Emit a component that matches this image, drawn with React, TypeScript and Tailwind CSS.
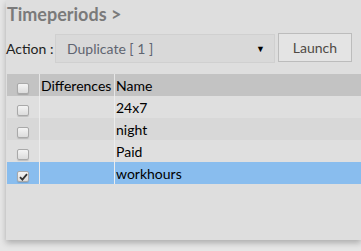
const rows = [
  { name: "24x7", bg: "bg-[#dfdfdf]", checked: false },
  { name: "night", bg: "bg-[#d8d8d8]", checked: false },
  { name: "Paid", bg: "bg-[#dfdfdf]", checked: false },
  { name: "workhours", bg: "bg-[#89bdee]", checked: true },
];

function Box({ checked }: { checked?: boolean }) {
  return (
    <span className="flex h-[11px] w-[12px] items-center justify-center rounded-[2px] border border-[#a9a9a9] bg-gradient-to-b from-[#f4f4f4] to-[#dcdcdc] shadow-[0_1px_1px_rgba(0,0,0,0.15)]">
      {checked ? (
        <svg width="9" height="8" viewBox="0 0 9 8">
          <path d="M1 4.2 L3.4 6.6 L8 1.2" fill="none" stroke="#333" strokeWidth="1.8" />
        </svg>
      ) : null}
    </span>
  );
}

export default function App() {
  return (
    <div className="h-[251px] w-[361px] overflow-hidden bg-[#e6e6e6] pl-[6px] font-['Lato',sans-serif]">
      <div className="h-[240px] bg-[#dedede] shadow-[0_3px_6px_rgba(0,0,0,0.25)]">
        <h1 className="pl-[1px] pt-[3px] text-[18px] font-bold leading-[22px] text-[#7a7a7a]">Timeperiods &gt;</h1>

        <div className="mt-[9px] flex items-center">
          <span className="w-[49px] text-[14px] text-[#222]">Action :</span>
          <div className="flex h-[29px] w-[220px] items-center justify-between border border-[#d0d0d0] bg-[#d9d9d9] pl-[11px] pr-[9px] text-[14px] text-[#5f6470]">
            <span>Duplicate [ 1 ]</span>
            <span className="text-[9px] text-black">▼</span>
          </div>
          <button className="ml-[3px] h-[29px] w-[74px] -translate-y-[1px] border border-[#bcbcbc] bg-[#e4e4e4] text-[14px] text-[#4f4a44]">
            Launch
          </button>
        </div>

        <div className="mt-[11px] ml-[1px] text-[14px] text-black">
          <div className="flex h-[22px] bg-[#c3c3c3]">
            <div className="flex w-[32px] items-end justify-center pb-[2px]">
              <Box />
            </div>
            <div className="w-[1px] bg-[#e6e6e6]" />
            <div className="flex w-[74px] items-center pl-[1px]">Differences</div>
            <div className="w-[1px] bg-[#e6e6e6]" />
            <div className="flex flex-1 items-center pl-[1px]">Name</div>
          </div>
          {rows.map((r) => (
            <div key={r.name} className={`flex h-[22px] ${r.bg}`}>
              <div className="flex w-[32px] items-end justify-center pb-[2px]">
                <Box checked={r.checked} />
              </div>
              <div className="w-[1px] bg-[#ececec]" />
              <div className="w-[74px]" />
              <div className="w-[1px] bg-[#ececec]" />
              <div className="flex flex-1 items-center pl-[1px]">{r.name}</div>
            </div>
          ))}
        </div>
      </div>
    </div>
  );
}
